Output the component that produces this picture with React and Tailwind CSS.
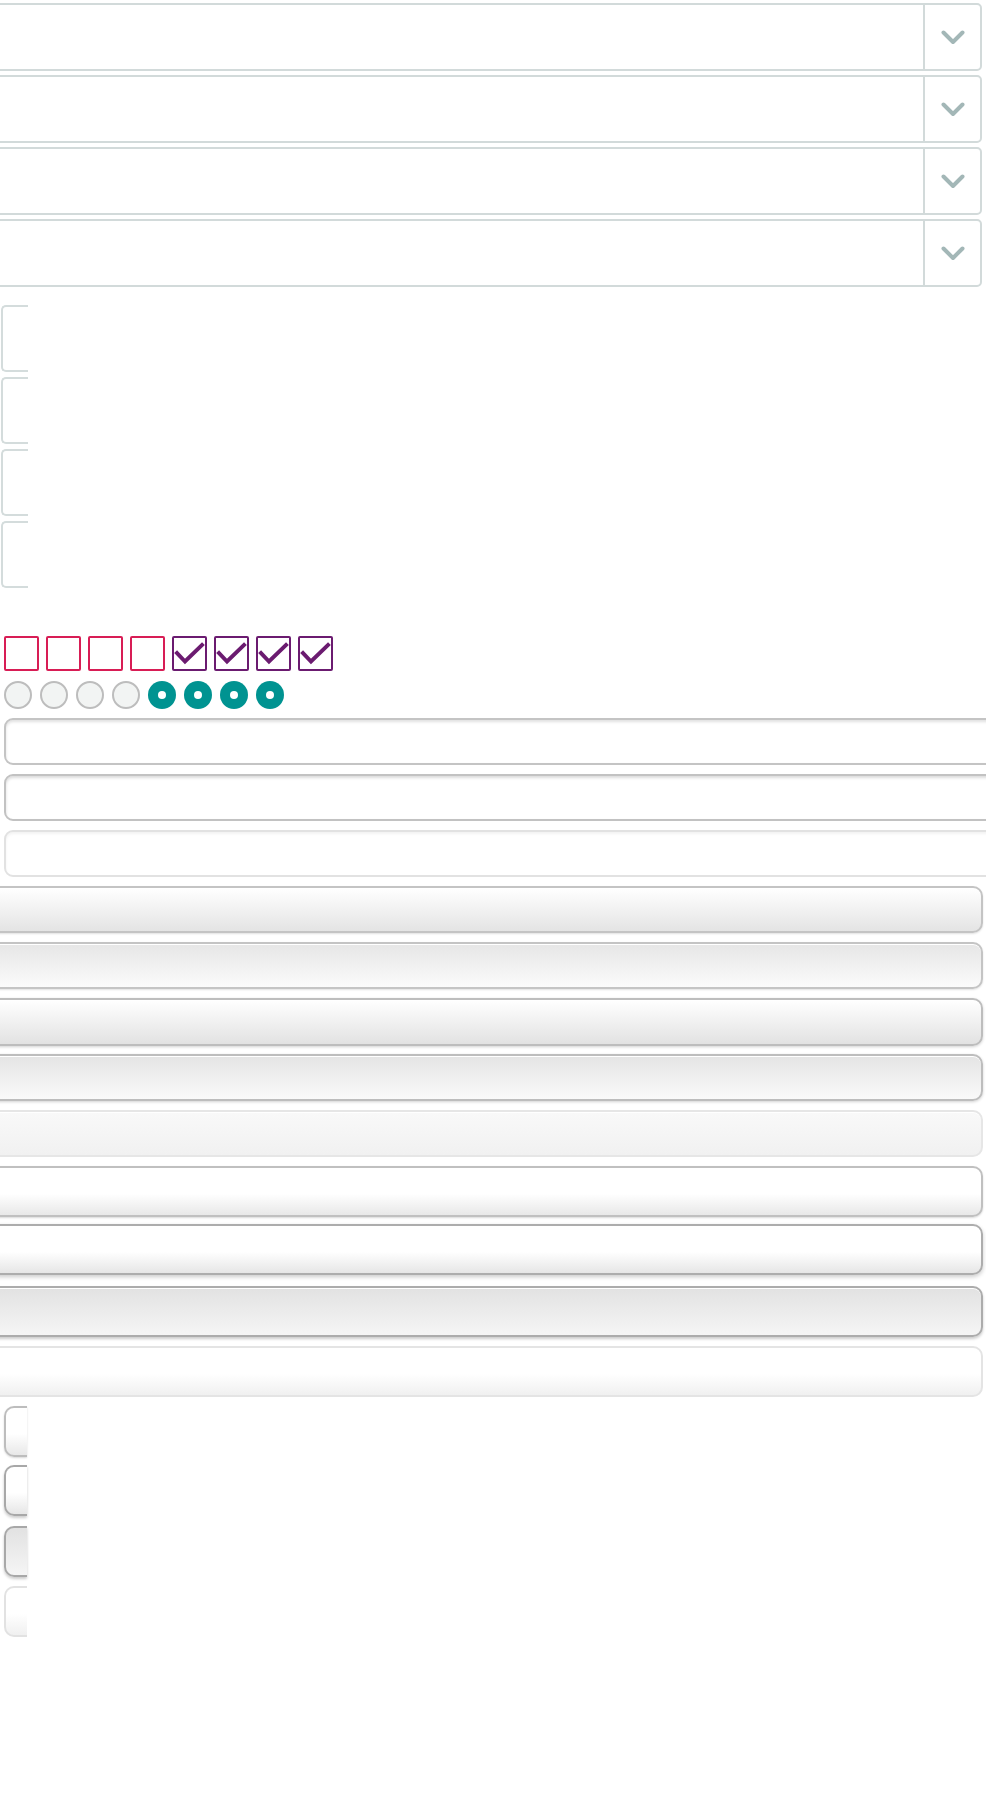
import React from 'react';

const selects = [0, 1, 2, 3];
const checks = [false, false, false, false, true, true, true, true];

const inputStyles = [
  'border-[#c4c4c4] shadow-[inset_0_2px_3px_rgba(0,0,0,0.12)]',
  'border-[#c2c2c2] shadow-[inset_0_2px_3px_rgba(0,0,0,0.14)]',
  'border-[#e2e2e2] shadow-[inset_0_2px_3px_rgba(0,0,0,0.05)]',
];

const buttons = [
  { h: 'h-[47px] mt-[9px]', cls: 'border-[#c4c4c4] bg-linear-to-b from-white to-[#e4e4e4] shadow-[inset_0_1px_0_#fff,0_1px_2px_rgba(0,0,0,0.12)]' },
  { h: 'h-[47px] mt-[9px]', cls: 'border-[#c4c4c4] bg-linear-to-b from-[#e6e6e6] to-[#fbfbfb] shadow-[inset_0_1px_0_#fff,0_1px_2px_rgba(0,0,0,0.12)]' },
  { h: 'h-[48px] mt-[9px]', cls: 'border-[#bdbdbd] bg-linear-to-b from-white to-[#e2e2e2] shadow-[inset_0_1px_0_#fff,0_1px_3px_rgba(0,0,0,0.18)]' },
  { h: 'h-[47px] mt-[8px]', cls: 'border-[#bdbdbd] bg-linear-to-b from-[#e4e4e4] to-[#fafafa] shadow-[inset_0_1px_0_#fff,0_1px_3px_rgba(0,0,0,0.18)]' },
  { h: 'h-[47px] mt-[9px]', cls: 'border-[#e6e6e6] bg-linear-to-b from-[#f9f9f9] to-[#f1f1f1] shadow-[inset_0_1px_0_#fff]' },
  { h: 'h-[51px] mt-[9px]', cls: 'border-[#c0c0c0] bg-linear-to-b from-white from-55% to-[#e8e8e8] shadow-[inset_0_1px_0_#fff,0_1px_2px_rgba(0,0,0,0.15)]' },
  { h: 'h-[51px] mt-[7px]', cls: 'border-[#adadad] bg-linear-to-b from-white from-55% to-[#e6e6e6] shadow-[inset_0_1px_0_#fff,0_2px_4px_rgba(0,0,0,0.2)]' },
  { h: 'h-[51px] mt-[11px]', cls: 'border-[#acacac] bg-linear-to-b from-[#e2e2e2] to-[#f5f5f5] shadow-[inset_0_1px_0_#fff,0_2px_3px_rgba(0,0,0,0.2)]' },
  { h: 'h-[51px] mt-[9px]', cls: 'border-[#e4e4e4] bg-linear-to-b from-white from-55% to-[#f0f0f0] shadow-[inset_0_1px_0_#fff]' },
];

const slices = [
  { mt: 'mt-[9px]', cls: 'border-[#bdbdbd] bg-linear-to-b from-white from-55% to-[#e8e8e8] shadow-[0_1px_2px_rgba(0,0,0,0.15)]' },
  { mt: 'mt-[8px]', cls: 'border-[#a8a8a8] bg-linear-to-b from-white from-55% to-[#e6e6e6] shadow-[0_2px_3px_rgba(0,0,0,0.2)]' },
  { mt: 'mt-[10px]', cls: 'border-[#a8a8a8] bg-linear-to-b from-[#e2e2e2] to-[#f5f5f5] shadow-[0_2px_3px_rgba(0,0,0,0.2)]' },
  { mt: 'mt-[9px]', cls: 'border-[#e2e2e2] bg-linear-to-b from-white from-55% to-[#f0f0f0]' },
];

const Chevron = () => (
  <svg width="24" height="15" viewBox="0 0 24 15" fill="none">
    <polyline points="2.5,2.5 12,12 21.5,2.5" stroke="#a3b7b7" strokeWidth="4" strokeLinecap="round" strokeLinejoin="round" />
  </svg>
);

const App = () => {
  return (
    <div className="w-[986px] min-h-[1800px] bg-white overflow-hidden">
      {/* select boxes */}
      <div className="pt-[3px] flex flex-col gap-[4px]">
        {selects.map((s) => (
          <div
            key={s}
            className="-ml-[10px] w-[992px] h-[68px] flex border-2 border-[#d2dada] rounded-[5px] bg-white"
          >
            <div className="flex-1" />
            <div className="w-[57px] border-l-2 border-[#d2dada] flex items-center justify-center">
              <Chevron />
            </div>
          </div>
        ))}
      </div>

      {/* clipped fields */}
      <div className="mt-[18px] flex flex-col gap-[5px] pl-[1px]">
        {selects.map((s) => (
          <div key={s} className="w-[27px] h-[67px] border-l-2 border-y-2 border-[#d4dcdc] rounded-l-[5px]" />
        ))}
      </div>

      {/* checkboxes */}
      <div className="mt-[48px] pl-[4px] flex gap-[7px]">
        {checks.map((c, i) => (
          <div
            key={i}
            className={`w-[35px] h-[35px] border-2 rounded-[2px] ${c ? 'border-[#6b1b70]' : 'border-[#d81d55]'}`}
          >
            {c && (
              <svg width="31" height="31" viewBox="0 0 31 31" fill="none">
                <polyline points="3,15 11,23.5 28,7" stroke="#6b1b70" strokeWidth="4" strokeLinecap="square" />
              </svg>
            )}
          </div>
        ))}
      </div>

      {/* radios */}
      <div className="mt-[10px] pl-[4px] flex gap-[8px]">
        {checks.map((c, i) =>
          c ? (
            <div key={i} className="w-[28px] h-[28px] rounded-full bg-[#009391] flex items-center justify-center">
              <div className="w-[8px] h-[8px] rounded-full bg-white" />
            </div>
          ) : (
            <div key={i} className="w-[28px] h-[28px] rounded-full bg-[#f2f4f3] border-2 border-[#bdbdbd]" />
          )
        )}
      </div>

      {/* text inputs */}
      <div className="mt-[9px] pl-[4px] flex flex-col gap-[9px]">
        {inputStyles.map((cls, i) => (
          <div key={i} className={`w-[1000px] h-[47px] border-2 rounded-[9px] bg-white ${cls}`} />
        ))}
      </div>

      {/* buttons */}
      <div className="flex flex-col">
        {buttons.map((b, i) => (
          <div
            key={i}
            className={`-ml-[12px] w-[995px] border-2 rounded-[10px] ${b.h} ${b.cls}`}
          />
        ))}
      </div>

      {/* clipped buttons */}
      <div className="flex flex-col pl-[4px]">
        {slices.map((s, i) => (
          <div key={i} className={`${s.mt} w-[23px] h-[51px] border-l-2 border-y-2 rounded-l-[10px] ${s.cls}`} />
        ))}
      </div>
    </div>
  );
};

export default App;
